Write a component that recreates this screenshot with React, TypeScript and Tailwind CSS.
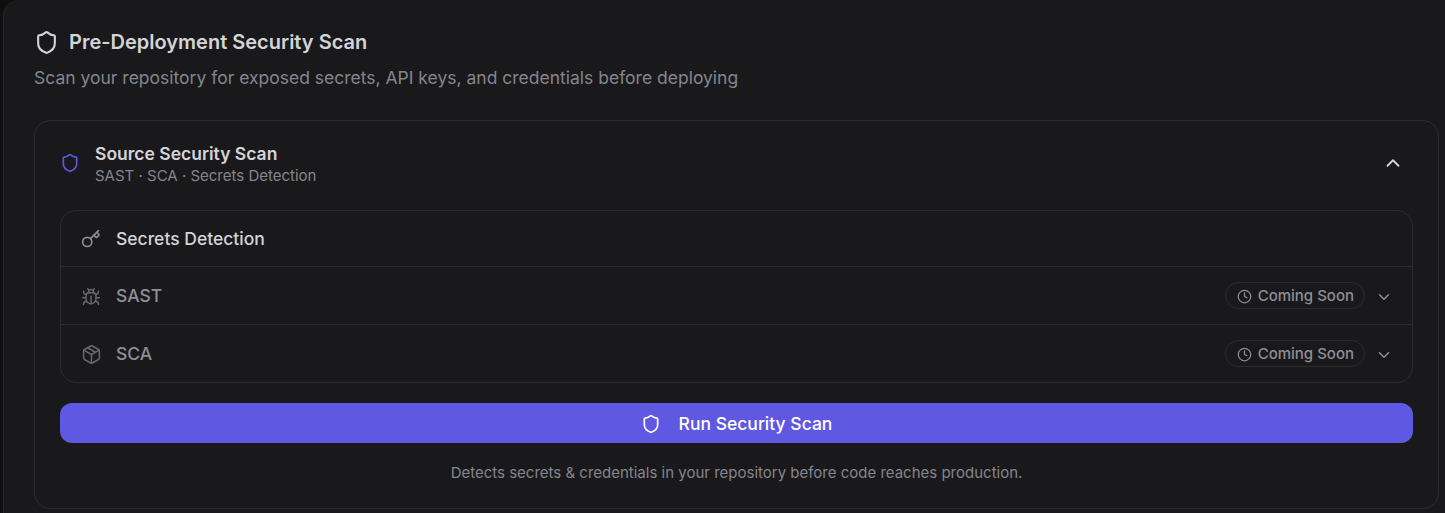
import { Shield, Key, Bug, Package, Clock, ChevronUp, ChevronDown } from "lucide-react";

function Row({ icon, label }: { icon: React.ReactNode; label: string }) {
  return (
    <div className="flex h-[58px] items-center justify-between border-t border-[#2c2c2f] pl-5 pr-[19px] pt-[2px]">
      <div className="flex items-center gap-[15px]">
        {icon}
        <span className="text-[17.5px] font-medium text-[#8e8e96]">{label}</span>
      </div>
      <div className="flex items-center gap-[10px]">
        <span className="mb-[2px] flex h-[27px] items-center gap-[6px] rounded-full border border-[#2c2c2f] pl-[11px] pr-[10px] pt-[2px] text-[15px] font-medium text-[#8e8e96]">
          <Clock size={15} strokeWidth={2} />
          Coming Soon
        </span>
        <ChevronDown size={18} className="text-[#8e8e96]" strokeWidth={2} />
      </div>
    </div>
  );
}

export default function App() {
  return (
    <div className="h-[513px] w-full overflow-hidden bg-[#0f0f10] pl-[3px] font-['Inter',sans-serif]">
      <div className="h-[560px] w-[1466px] rounded-tl-2xl border-l border-[#2a2a2d] bg-[#19191b] pl-[30px] pr-[30px] pt-[26px]">
        <div className="flex h-[32px] items-center gap-[10px]">
          <Shield size={25} strokeWidth={2} className="text-[#d4d4d8]" />
          <h1 className="text-xl font-semibold text-[#d4d4d8]">Pre-Deployment Security Scan</h1>
        </div>
        <p className="mt-[8px] text-[17.5px] leading-6 text-[#85858d]">
          Scan your repository for exposed secrets, API keys, and credentials before deploying
        </p>
        <div className="mt-[30px] h-[389px] rounded-2xl border border-[#2c2c2f] px-[25px]">
          <div className="flex h-[89px] items-center justify-between pb-[3px]">
            <div className="flex items-center gap-[15px]">
              <Shield size={20} strokeWidth={2} className="mb-[3px] text-[#5f58e2]" />
              <div>
                <div className="text-[17.5px] font-semibold leading-[22px] text-[#d4d4d8]">Source Security Scan</div>
                <div className="mt-[1px] text-[15px] leading-5 text-[#85858d]">SAST · SCA · Secrets Detection</div>
              </div>
            </div>
            <ChevronUp size={22} className="mb-[3px] mr-[9px] text-[#d4d4d8]" strokeWidth={2} />
          </div>
          <div className="overflow-hidden rounded-2xl border border-[#2c2c2f]">
            <div className="flex h-[55px] items-center gap-[15px] pl-5 pt-[1px]">
              <Key size={20} strokeWidth={2} className="text-[#8e8e96]" />
              <span className="text-[17.5px] font-medium text-[#d4d4d8]">Secrets Detection</span>
            </div>
            <Row icon={<Bug size={20} strokeWidth={1.75} className="text-[#66666c]" />} label="SAST" />
            <Row icon={<Package size={21} strokeWidth={1.75} className="-mr-[1px] text-[#66666c]" />} label="SCA" />
          </div>
          <button className="mt-5 flex h-10 w-full items-center justify-center gap-[18px] rounded-xl bg-[#5f58e2] pt-[2px] text-[17.5px] font-medium text-white">
            <Shield size={20} strokeWidth={2} className="mb-[1px]" />
            Run Security Scan
          </button>
          <p className="mt-[20px] text-center text-[15px] leading-5 text-[#85858d]">
            Detects secrets &amp; credentials in your repository before code reaches production.
          </p>
        </div>
      </div>
    </div>
  );
}
